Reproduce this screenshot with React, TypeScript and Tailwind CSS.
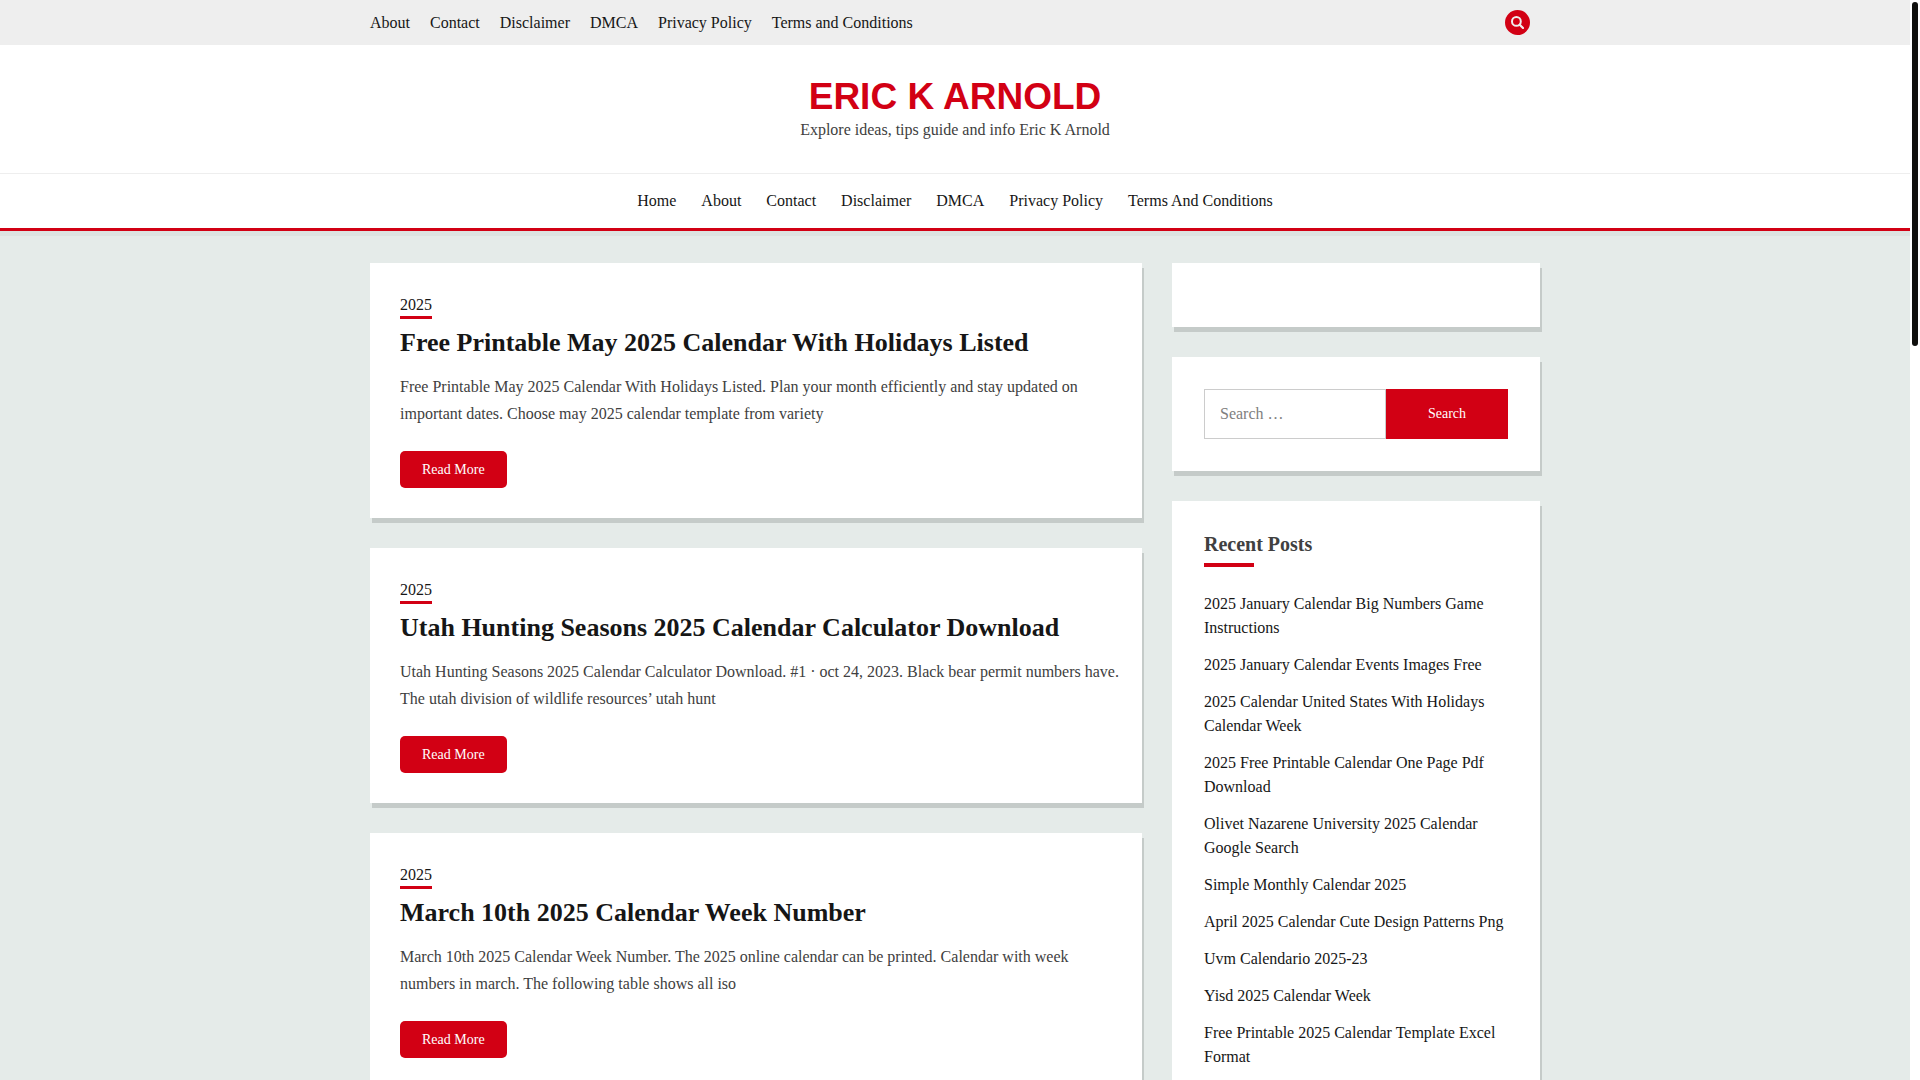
const pages = ["About", "Contact", "Disclaimer", "DMCA", "Privacy Policy"];
const topLinks = [...pages, "Terms and Conditions"];
const mainLinks = ["Home", ...pages, "Terms And Conditions"];

const articles = [
  {
    title: "Free Printable May 2025 Calendar With Holidays Listed",
    text: "Free Printable May 2025 Calendar With Holidays Listed. Plan your month efficiently and stay updated on important dates. Choose may 2025 calendar template from variety",
  },
  {
    title: "Utah Hunting Seasons 2025 Calendar Calculator Download",
    text: "Utah Hunting Seasons 2025 Calendar Calculator Download. #1 · oct 24, 2023. Black bear permit numbers have. The utah division of wildlife resources’ utah hunt",
  },
  {
    title: "March 10th 2025 Calendar Week Number",
    text: "March 10th 2025 Calendar Week Number. The 2025 online calendar can be printed. Calendar with week numbers in march. The following table shows all iso",
  },
];

const recent = [
  "2025 January Calendar Big Numbers Game Instructions",
  "2025 January Calendar Events Images Free",
  "2025 Calendar United States With Holidays Calendar Week",
  "2025 Free Printable Calendar One Page Pdf Download",
  "Olivet Nazarene University 2025 Calendar Google Search",
  "Simple Monthly Calendar 2025",
  "April 2025 Calendar Cute Design Patterns Png",
  "Uvm Calendario 2025-23",
  "Yisd 2025 Calendar Week",
  "Free Printable 2025 Calendar Template Excel Format",
];

function SearchIcon() {
  return (
    <svg viewBox="0 0 13 13" className="size-[13px]" fill="none" stroke="currentColor" aria-hidden="true">
      <circle cx="5.4" cy="5.4" r="4.4" strokeWidth="2" />
      <path d="M8.7 8.7 12 12" strokeWidth="2.2" strokeLinecap="round" />
    </svg>
  );
}

function Article({ title, text }: { title: string; text: string }) {
  return (
    <article className="flex flex-col items-start bg-white py-[30px] pr-5 pl-[30px] shadow-[2px_5px_0_#c5cbc9]">
      <a href="#" className="border-b-3 border-[#d20014] text-base leading-[23px] text-[#161616]">
        2025
      </a>
      <h2 className="mt-1 text-[26px] leading-10 font-bold text-[#161616]">
        <a href="#">{title}</a>
      </h2>
      <p className="mt-2.5 leading-[27px]">{text}</p>
      <a
        href="#"
        className="mt-6 rounded-[5px] bg-[#d20014] px-[22px] text-sm leading-[37px] text-white"
      >
        Read More
      </a>
    </article>
  );
}

export default function App() {
  return (
    <div className="flex h-screen bg-white font-['Liberation_Serif',serif] text-base text-[#404040]">
      <div className="min-w-0 flex-1 overflow-y-auto bg-[#e5ebe9] [scrollbar-width:none]">
        <div className="bg-[#eeeeee]">
          <div className="mx-auto flex h-[45px] max-w-[1170px] items-center justify-between pr-2.5">
            <nav aria-label="Top" className="flex gap-5 text-[#161616]">
              {topLinks.map((l) => (
                <a key={l} href="#">
                  {l}
                </a>
              ))}
            </nav>
            <button
              aria-label="Open search"
              className="flex size-[25px] items-center justify-center rounded-full bg-[#d20014] text-[#eeeeee]"
            >
              <SearchIcon />
            </button>
          </div>
        </div>

        <header className="border-b-3 border-[#d20014] bg-white text-center shadow-[0_5px_0_#dde3e1]">
          <div className="pt-[31px] pb-[31px]">
            <h1 className="font-['Liberation_Sans',sans-serif] text-[37px] leading-[42px] font-bold text-[#d20014]">
              <a href="#">ERIC K ARNOLD</a>
            </h1>
            <p className="leading-6">Explore ideas, tips guide and info Eric K Arnold</p>
          </div>
          <nav
            aria-label="Main"
            className="flex h-[55px] items-center justify-center gap-[25px] border-t border-[#eeeeee] text-[#161616]"
          >
            {mainLinks.map((l) => (
              <a key={l} href="#">
                {l}
              </a>
            ))}
          </nav>
        </header>

        <div className="mx-auto flex max-w-[1170px] items-start gap-[30px] pt-8 pb-8">
          <main className="flex min-w-0 flex-1 flex-col gap-[30px]">
            {articles.map((a) => (
              <Article key={a.title} {...a} />
            ))}
          </main>

          <aside className="flex w-[368px] flex-col gap-[30px]">
            <section className="bg-white p-8 shadow-[2px_5px_0_#c5cbc9]" />
            <section className="bg-white p-8 shadow-[2px_5px_0_#c5cbc9]">
              <form role="search" className="flex h-[50px]" onSubmit={(e) => e.preventDefault()}>
                <input
                  type="search"
                  aria-label="Search for"
                  placeholder="Search …"
                  className="min-w-0 flex-1 border border-[#cccccc] px-[15px] placeholder:text-[#808080]"
                />
                <button type="submit" className="w-[122px] bg-[#d20014] text-sm text-white">
                  Search
                </button>
              </form>
            </section>
            <section className="bg-white p-8 shadow-[2px_5px_0_#c5cbc9]">
              <h2 className="text-xl leading-[22px] font-bold">Recent Posts</h2>
              <div className="mt-2 h-1 w-[50px] bg-[#d20014]" />
              <ul className="mt-[25px] flex flex-col gap-[13px] leading-6 text-[#161616]">
                {recent.map((r) => (
                  <li key={r}>
                    <a href="#">{r}</a>
                  </li>
                ))}
              </ul>
            </section>
          </aside>
        </div>
      </div>
      <div className="w-2.5 p-0.5">
        <div className="h-[32%] w-1.5 rounded-full bg-[#0f0f0d]" />
      </div>
    </div>
  );
}
